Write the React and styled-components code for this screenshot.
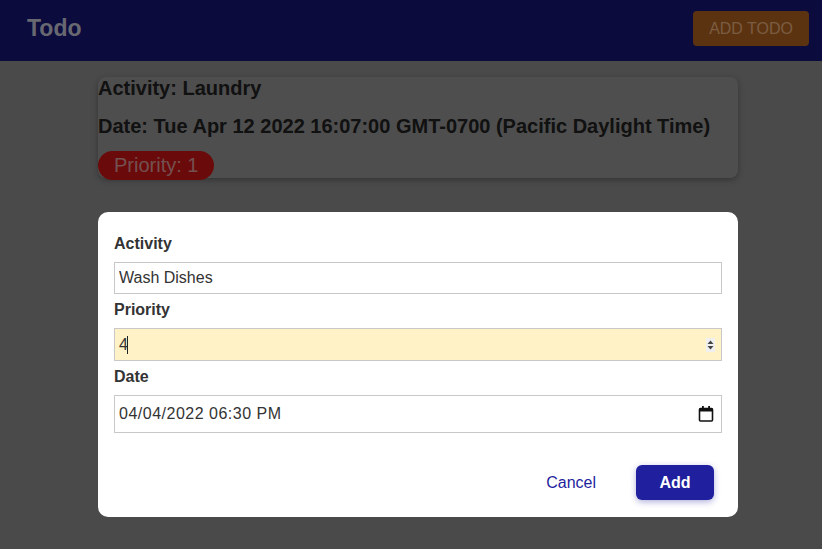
import styled, { createGlobalStyle } from "styled-components";

const GlobalStyle = createGlobalStyle`
    html, body {
        margin: 0;
        padding: 0;
        background: #949494;
        font-family: "Liberation Sans", Arial, sans-serif;
    }
`;

const Page = styled.div`
    min-height: 549px;
`;

const TopBar = styled.header`
    height: 61px;
    background: #16167a;
    display: flex;
    align-items: center;
    justify-content: space-between;
    padding: 0 13px 0 27px;
    box-sizing: border-box;
`;

const Brand = styled.h1`
    margin: 0;
    font-size: 23px;
    font-weight: bold;
    color: #d0d0e2;
    padding-bottom: 4px;
`;

const AddTodoButton = styled.button`
    height: 35px;
    padding: 0 16px;
    border: none;
    border-radius: 4px;
    background: #b86620;
    color: #f2b884;
    font-family: inherit;
    font-size: 16px;
    text-transform: uppercase;
    margin-bottom: 4px;
`;

const Main = styled.main`
    width: 640px;
    padding: 16px 0 0 98px;
`;

const TodoCard = styled.article`
    background: #9c9c9c;
    border-radius: 8px;
    box-shadow: 0 2px 6px rgba(0, 0, 0, 0.3);
    height: 101px;
`;

const CardLine = styled.p`
    margin: 0 0 15px;
    font-size: 20px;
    font-weight: bold;
    line-height: 23px;
    color: #222;
`;

const PriorityChip = styled.span`
    display: inline-flex;
    align-items: center;
    height: 29px;
    padding: 0 16px;
    border-radius: 15px;
    background: #d61414;
    color: #e8a0a0;
    font-size: 20px;
    margin-top: -2px;
`;

const Backdrop = styled.div`
    position: fixed;
    inset: 0;
    background: rgba(0, 0, 0, 0.5);
    z-index: 1;
`;

const Dialog = styled.form`
    position: relative;
    z-index: 2;
    margin-top: 34px;
    background: #fff;
    border-radius: 10px;
    padding: 23px 16px 17px;
    display: flex;
    flex-direction: column;
`;

const Label = styled.label`
    font-size: 16px;
    font-weight: bold;
    color: #333;
    line-height: 18px;
    margin-bottom: 9px;
`;

const FieldWrap = styled.div`
    position: relative;
    margin-bottom: 7px;
`;

const Input = styled.input`
    width: 100%;
    box-sizing: border-box;
    height: ${(p) => p.$height || 32}px;
    border: 1px solid #c8c8c8;
    background: ${(p) => (p.$highlight ? "#fff2c6" : "#fff")};
    font-family: inherit;
    font-size: 16px;
    letter-spacing: ${(p) => p.$spacing || 0}px;
    color: #333;
    padding: 0 4px;
    outline: none;
`;

const FieldIcon = styled.span`
    position: absolute;
    right: ${(p) => p.$right}px;
    top: 50%;
    transform: translateY(-50%);
    display: flex;
    pointer-events: none;
`;

const Caret = styled.span`
    position: absolute;
    left: 13px;
    top: 8px;
    width: 1px;
    height: 18px;
    background: #222;
    pointer-events: none;
`;

const Actions = styled.div`
    display: flex;
    justify-content: flex-end;
    align-items: center;
    gap: 40px;
    margin-top: 25px;
    padding-right: 8px;
`;

const TextButton = styled.button`
    border: none;
    background: none;
    color: #1f1f9e;
    font-family: inherit;
    font-size: 16px;
    padding: 0;
`;

const PrimaryButton = styled.button`
    width: 78px;
    height: 35px;
    border: none;
    border-radius: 6px;
    background: #20209e;
    color: #fff;
    font-family: inherit;
    font-size: 16px;
    font-weight: bold;
    box-shadow: 0 2px 6px rgba(32, 32, 158, 0.35);
`;

const Spinner = () => (
    <svg width="9" height="14" viewBox="0 0 9 14">
        <rect width="9" height="14" fill="#f0f0f0" />
        <path d="M1.5 6 L4.5 2.5 L7.5 6 Z" fill="#444" />
        <path d="M1.5 8 L4.5 11.5 L7.5 8 Z" fill="#444" />
    </svg>
);

const CalendarIcon = () => (
    <svg width="16" height="17" viewBox="0 0 16 17">
        <rect x="1.5" y="3" width="13" height="12.5" rx="1" fill="none" stroke="#111" strokeWidth="1.6" />
        <rect x="1.5" y="3" width="13" height="3" fill="#111" />
        <rect x="4" y="0.5" width="1.8" height="3.5" fill="#111" />
        <rect x="10.2" y="0.5" width="1.8" height="3.5" fill="#111" />
    </svg>
);

const App = () => {
    return (
        <Page>
            <GlobalStyle />
            <TopBar>
                <Brand>Todo</Brand>
                <AddTodoButton>Add Todo</AddTodoButton>
            </TopBar>
            <Main>
                <TodoCard>
                    <CardLine>Activity: Laundry</CardLine>
                    <CardLine>Date: Tue Apr 12 2022 16:07:00 GMT-0700 (Pacific Daylight Time)</CardLine>
                    <PriorityChip>Priority: 1</PriorityChip>
                </TodoCard>
                <Backdrop />
                <Dialog onSubmit={(e) => e.preventDefault()}>
                    <Label>Activity</Label>
                    <FieldWrap>
                        <Input defaultValue="Wash Dishes" />
                    </FieldWrap>
                    <Label>Priority</Label>
                    <FieldWrap>
                        <Input $height={33} $highlight defaultValue="4" />
                        <Caret />
                        <FieldIcon $right={7}>
                            <Spinner />
                        </FieldIcon>
                    </FieldWrap>
                    <Label>Date</Label>
                    <FieldWrap>
                        <Input $height={38} $spacing={0.5} defaultValue="04/04/2022 06:30 PM" />
                        <FieldIcon $right={8}>
                            <CalendarIcon />
                        </FieldIcon>
                    </FieldWrap>
                    <Actions>
                        <TextButton type="button">Cancel</TextButton>
                        <PrimaryButton type="submit">Add</PrimaryButton>
                    </Actions>
                </Dialog>
            </Main>
        </Page>
    );
};

export default App;
